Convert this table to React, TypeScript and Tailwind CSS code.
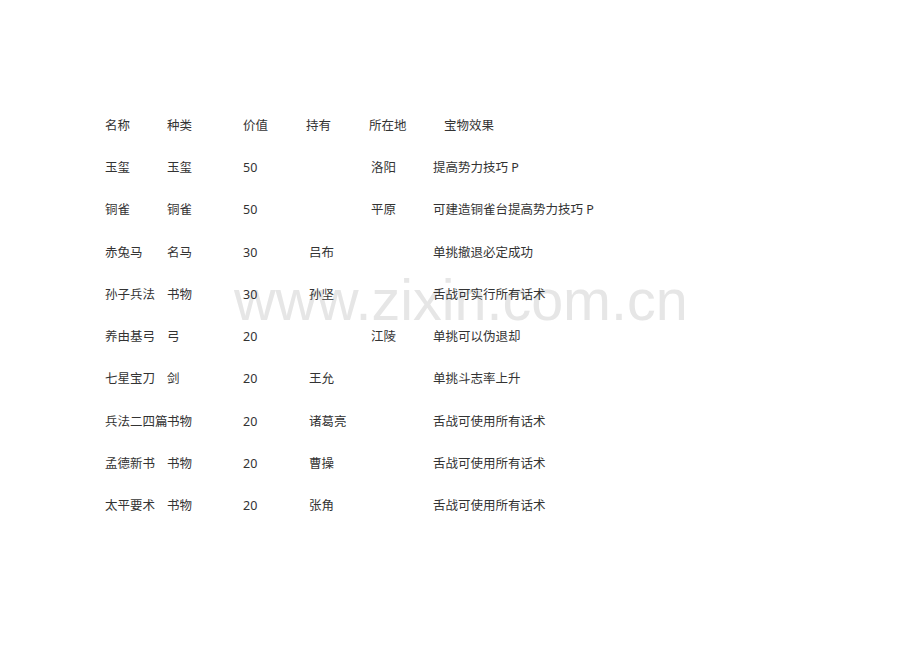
const rows = [
  { name: '玉玺', kind: '玉玺', value: '50', owner: '', place: '洛阳', effect: '提高势力技巧 P' },
  { name: '铜雀', kind: '铜雀', value: '50', owner: '', place: '平原', effect: '可建造铜雀台提高势力技巧 P' },
  { name: '赤兔马', kind: '名马', value: '30', owner: '吕布', place: '', effect: '单挑撤退必定成功' },
  { name: '孙子兵法', kind: '书物', value: '30', owner: '孙坚', place: '', effect: '舌战可实行所有话术' },
  { name: '养由基弓', kind: '弓', value: '20', owner: '', place: '江陵', effect: '单挑可以伪退却' },
  { name: '七星宝刀', kind: '剑', value: '20', owner: '王允', place: '', effect: '单挑斗志率上升' },
  { name: '兵法二四篇', kind: '书物', value: '20', owner: '诸葛亮', place: '', effect: '舌战可使用所有话术' },
  { name: '孟德新书', kind: '书物', value: '20', owner: '曹操', place: '', effect: '舌战可使用所有话术' },
  { name: '太平要术', kind: '书物', value: '20', owner: '张角', place: '', effect: '舌战可使用所有话术' },
];

const cols = 'grid grid-cols-[62px_76px_63px_63px_64px_1fr] h-[42.25px] items-center whitespace-nowrap';

export default function App() {
  return (
    <div
      className="relative w-[920px] h-[651px] bg-white text-[#333333] text-[12.5px] overflow-hidden"
      style={{ fontFamily: '"Noto Sans", "Noto Sans CJK SC", sans-serif' }}
    >
      {/* watermark, behind the table */}
      <div
        aria-hidden="true"
        className="absolute left-[234px] top-[272px] text-[57.5px] leading-none text-[#e6e6e6] pointer-events-none select-none"
        style={{ fontFamily: '"Liberation Sans", Arial, sans-serif' }}
      >
        www.zixin.com.cn
      </div>

      <div className="relative pt-[105px] pl-[105px]">
        <div className={cols}>
          <span>名称</span>
          <span>种类</span>
          <span>价值</span>
          <span>持有</span>
          <span>所在地</span>
          <span className="pl-[11px]">宝物效果</span>
        </div>
        {rows.map((r) => (
          <div key={r.name} className={cols}>
            <span>{r.name}</span>
            <span>{r.kind}</span>
            <span>{r.value}</span>
            <span className="pl-[3px]">{r.owner}</span>
            <span className="pl-[2px]">{r.place}</span>
            <span>{r.effect}</span>
          </div>
        ))}
      </div>
    </div>
  );
}
